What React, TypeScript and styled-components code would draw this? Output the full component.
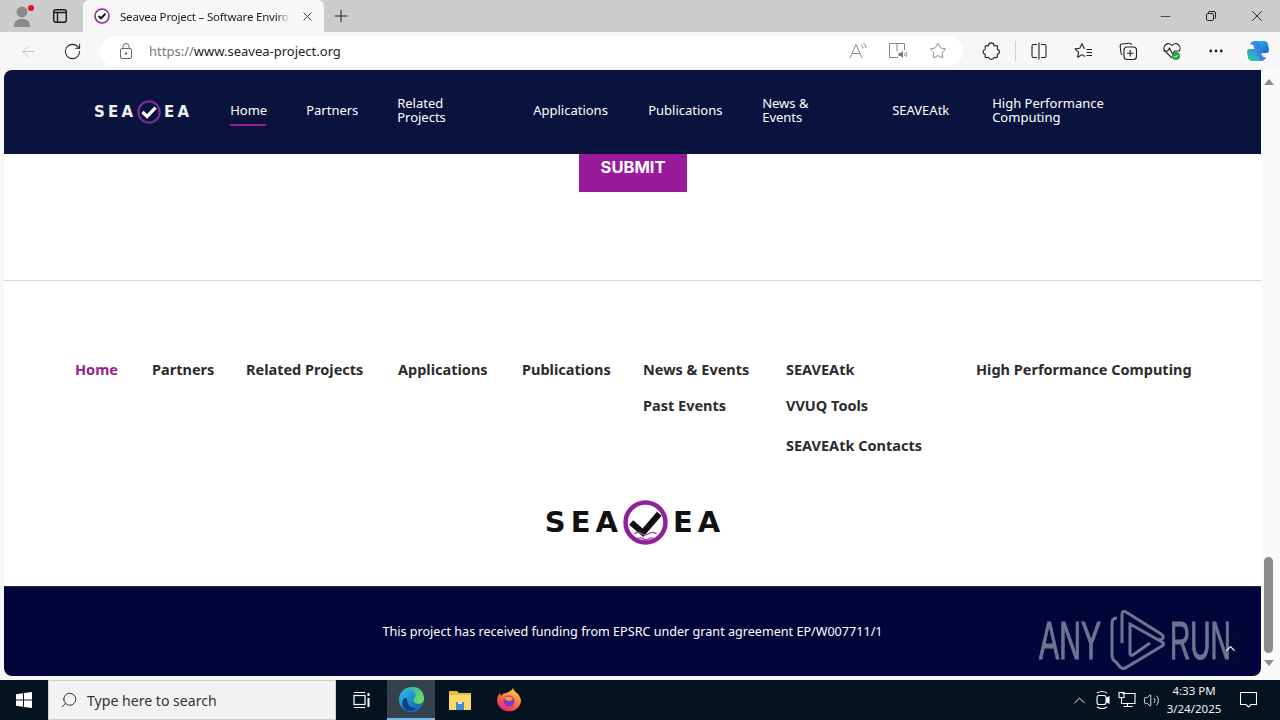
import React from 'react';
import styled, { createGlobalStyle } from 'styled-components';
import { ArrowLeft, RotateCw, Star, X, Plus, Minus, Search, ChevronUp, Volume2, MoreHorizontal } from 'lucide-react';

const GlobalStyle = createGlobalStyle`
    html, body {
        margin: 0;
        padding: 0;
        width: 1280px;
        height: 720px;
        overflow: hidden;
        background: #f7f7f7;
    }
    * {
        box-sizing: border-box;
    }
`;

const Screen = styled.div`
    width: 1280px;
    height: 720px;
    display: flex;
    flex-direction: column;
    overflow: hidden;
    font-family: 'Noto Sans', 'Open Sans', sans-serif;
    position: relative;
`;

const TabStrip = styled.div`
    height: 32px;
    background: #cccccc;
    display: flex;
    align-items: flex-end;
    color: #222;
`;

const ProfileSlot = styled.div`
    width: 44px;
    height: 32px;
    display: flex;
    align-items: center;
    justify-content: center;
    position: relative;
`;

const RedDot = styled.span`
    position: absolute;
    top: 5px;
    left: 28px;
    width: 6px;
    height: 6px;
    border-radius: 50%;
    background: #e81123;
`;

const TabsIconSlot = styled.div`
    width: 32px;
    height: 32px;
    display: flex;
    align-items: center;
    justify-content: center;
`;

const ActiveTab = styled.div`
    width: 241px;
    height: 32px;
    margin-left: 7px;
    background: #f7f7f7;
    border-radius: 6px 6px 0 0;
    display: flex;
    align-items: center;
    padding: 0 9px 0 11px;
    gap: 10px;
    svg {
        flex: none;
    }
`;

const TabTitle = styled.span`
    flex: 1;
    min-width: 0;
    font-size: 11.5px;
    letter-spacing: -0.2px;
    white-space: nowrap;
    color: #222;
    -webkit-mask-image: linear-gradient(90deg, #000 92%, transparent);
`;

const NewTab = styled.div`
    width: 34px;
    height: 32px;
    display: flex;
    align-items: center;
    justify-content: center;
`;

const WindowControls = styled.div`
    margin-left: auto;
    display: flex;
    height: 32px;
    align-items: center;
`;

const WindowButton = styled.div`
    width: 46px;
    height: 32px;
    display: flex;
    align-items: center;
    justify-content: center;
`;

const AddressRow = styled.div`
    height: 38px;
    background: #f7f7f7;
    display: flex;
    align-items: center;
    padding-left: 9px;
`;

const NavIcon = styled.div<{ $width: number }>`
    width: ${(props) => props.$width}px;
    height: 32px;
    display: flex;
    align-items: center;
    justify-content: center;
    flex: none;
    position: relative;
`;

const AddressBar = styled.div`
    width: 863px;
    height: 30px;
    margin: 0 4px 0 3px;
    background: #fff;
    border-radius: 15px;
    display: flex;
    align-items: center;
    padding-left: 19px;
`;

const UrlText = styled.div`
    flex: 1;
    margin-left: 16px;
    font-size: 13px;
    color: #222;
    span {
        color: #767676;
    }
`;

const ToolDivider = styled.div`
    width: 1px;
    height: 20px;
    flex: none;
    background: #d0d0d0;
`;

const PageArea = styled.div`
    flex: 1;
    min-height: 0;
    display: flex;
    padding-left: 4px;
    background: #f7f7f7;
`;

const Page = styled.div`
    width: 1257px;
    height: 606px;
    background: #fff;
    border-radius: 8px 0 8px 8px;
    overflow: hidden;
    display: flex;
    flex-direction: column;
    position: relative;
`;

const Header = styled.header`
    height: 84px;
    flex: none;
    background: #0a133e;
    display: flex;
    align-items: center;
    padding-left: 90px;
    gap: 41px;
    position: relative;
    z-index: 1;
`;

const Wordmark = styled.div<{ $size: number; $color: string; $gap: number; $spacing: number }>`
    display: flex;
    align-items: center;
    gap: ${(props) => props.$gap}px;
    font-family: 'DejaVu Sans', 'Liberation Sans', sans-serif;
    font-weight: 700;
    font-size: ${(props) => props.$size}px;
    letter-spacing: ${(props) => props.$spacing}px;
    color: ${(props) => props.$color};
    line-height: 1;
    span {
        margin-right: ${(props) => -props.$spacing}px;
    }
`;

const TopNav = styled.nav`
    display: flex;
    align-items: center;
    gap: 40px;
    padding-bottom: 4px;
`;

const TopLink = styled.a<{ $width: number; $active?: boolean }>`
    display: block;
    flex: none;
    width: ${(props) => props.$width}px;
    font-size: 13px;
    line-height: 14px;
    white-space: nowrap;
    color: #fff;
    position: relative;
    ${(props) =>
        props.$active &&
        `&::after {
            content: '';
            position: absolute;
            left: 0;
            right: 0;
            bottom: -9px;
            height: 2px;
            background: #9c1f97;
        }`}
`;

const Main = styled.main`
    height: 127px;
    flex: none;
    display: flex;
    justify-content: center;
    align-items: flex-start;
    border-bottom: 1px solid #d6d6d6;
`;

const SubmitButton = styled.button`
    width: 108px;
    height: 38px;
    margin-right: -1px;
    border: 0;
    background: #9a1a9c;
    color: #fff;
    font-family: 'Inter', 'Liberation Sans', sans-serif;
    font-weight: 700;
    font-size: 16.5px;
    padding: 0 0 11px;
    display: flex;
    align-items: center;
    justify-content: center;
    line-height: 1;
`;

const FooterNav = styled.nav`
    height: 219px;
    flex: none;
    display: flex;
    padding: 78px 0 0 71px;
    gap: 34px;
`;

const FooterColumn = styled.div<{ $width: number }>`
    display: flex;
    flex-direction: column;
    width: ${(props) => props.$width}px;
    flex: none;
`;

const FooterLink = styled.a<{ $active?: boolean; $top?: number }>`
    display: block;
    font-size: 14.5px;
    font-weight: 700;
    line-height: 20px;
    white-space: nowrap;
    margin-top: ${(props) => props.$top ?? 0}px;
    color: ${(props) => (props.$active ? '#97208f' : '#2b2b2b')};
`;

const LogoRow = styled.div`
    height: 86px;
    flex: none;
    display: flex;
    justify-content: center;
    align-items: flex-start;
`;

const Funding = styled.footer`
    flex: 1;
    background: #00053a;
    display: flex;
    justify-content: center;
    padding-top: 37px;
    border-top: 1px solid #1d2a4d;
    color: #fff;
    font-size: 12.6px;
    line-height: 16px;
`;

const ScrollTop = styled.div`
    position: absolute;
    left: 1212px;
    top: 564px;
    width: 28px;
    height: 28px;
    background: #040735;
    display: flex;
    align-items: center;
    justify-content: center;
`;

const Watermark = styled.div`
    position: absolute;
    left: 1039px;
    top: 610px;
    height: 61px;
    display: flex;
    align-items: center;
    color: #fff;
    opacity: 0.44;
    font-family: 'Liberation Sans', sans-serif;
    font-size: 53px;
    line-height: 1;
    z-index: 4;
`;

const WatermarkWord = styled.span<{ $width: number; $scale: number; $inset?: number }>`
    display: inline-block;
    width: ${(props) => props.$width}px;
    margin-left: ${(props) => props.$inset ?? 0}px;
    transform-origin: left center;
    transform: scaleX(${(props) => props.$scale});
    white-space: nowrap;
    -webkit-text-stroke: 1px #fff;
`;

const Scrollbar = styled.div`
    width: 19px;
    height: 610px;
    background: #fafafa;
    display: flex;
    flex-direction: column;
    align-items: center;
    justify-content: space-between;
    padding: 9px 4px 14px 0;
    position: relative;
`;

const ScrollArrow = styled.span<{ $down?: boolean }>`
    width: 0;
    height: 0;
    border-left: 5px solid transparent;
    border-right: 5px solid transparent;
    ${(props) => (props.$down ? 'border-top: 6px solid #8a8a8a;' : 'border-bottom: 6px solid #8a8a8a;')}
`;

const ScrollThumb = styled.div`
    position: absolute;
    left: 3px;
    top: 487px;
    width: 9px;
    height: 96px;
    background: #8c8c8c;
    border-radius: 5px;
`;

const Taskbar = styled.div`
    height: 40px;
    flex: none;
    background: #04131f;
    display: flex;
    align-items: stretch;
    color: #fff;
`;

const StartSlot = styled.div`
    width: 48px;
    display: flex;
    align-items: center;
    justify-content: center;
`;

const SearchBox = styled.div`
    width: 288px;
    background: #f2f2f2;
    border: 1px solid #cfcfcf;
    display: flex;
    align-items: center;
    padding-left: 11px;
    gap: 9px;
    color: #333;
    font-size: 14.1px;
    svg {
        transform: scaleX(-1);
    }
`;

const TaskSlot = styled.div<{ $width: number; $active?: boolean }>`
    width: ${(props) => props.$width}px;
    display: flex;
    align-items: center;
    justify-content: center;
    background: ${(props) => (props.$active ? '#33424d' : 'transparent')};
    border-bottom: ${(props) => (props.$active ? '2px solid #76b9ed' : '0')};
`;

const Tray = styled.div`
    margin-left: auto;
    display: flex;
    align-items: center;
    padding-right: 8px;
`;

const TrayIcon = styled.div<{ $width: number }>`
    width: ${(props) => props.$width}px;
    display: flex;
    align-items: center;
    justify-content: center;
`;

const Clock = styled.div`
    width: 60px;
    margin-left: 1px;
    text-align: center;
    white-space: nowrap;
    font-size: 11.5px;
    line-height: 18px;
    color: #f0f0f0;
`;

const Favicon = () => (
    <svg width="16" height="16" viewBox="0 0 16 16">
        <circle cx="8" cy="8" r="7" fill="#fff" stroke="#93269b" strokeWidth="1.6" />
        <path d="M4.600 8 L7 10.400 L11.400 5.600" fill="none" stroke="#111" strokeWidth="2" />
    </svg>
);

const ProfileIcon = () => (
    <svg width="18" height="24" viewBox="0 0 18 24" fill="#8a8a8a">
        <circle cx="9" cy="8" r="5.400" />
        <path d="M1 23c0-6 3-8 8-8s8 2 8 8z" />
    </svg>
);

const TabsIcon = () => (
    <svg width="14" height="14" viewBox="0 0 14 14" fill="none" stroke="#1a1a1a" strokeWidth="1.400">
        <rect x="0.700" y="0.700" width="12.600" height="12.600" rx="2" />
        <path d="M0.700 3.500h12.600M4.500 3.500v9.800" />
    </svg>
);

const RestoreIcon = () => (
    <svg width="10" height="10" viewBox="0 0 10 10" fill="none" stroke="#222">
        <rect x="0.500" y="2.500" width="7" height="7" rx="1.200" />
        <path d="M2.500 2V1.300Q2.500 .5 3.300 .5H8Q9.500 .5 9.500 2V6.800Q9.500 7.500 8.500 7.500" />
    </svg>
);

const LockIcon = () => (
    <svg width="14" height="16" viewBox="0 0 14 16" fill="none" stroke="#666" strokeWidth="1">
        <rect x="1.500" y="5.500" width="11" height="10" rx="1.500" />
        <path d="M4 5.500V3.500a3 3 0 0 1 6 0V5.500" />
        <circle cx="7" cy="10.500" r="0.800" fill="#666" />
    </svg>
);

const ReadAloudIcon = () => (
    <svg width="20" height="18" viewBox="0 0 20 18" fill="none" stroke="#888" strokeWidth="1">
        <path d="M2 16 L8 2.500 L14 16 M4.200 11.500H11.800" />
        <path d="M13 2.500q2 1.500 2 4M15.500 1q2.500 2 2.500 5" />
    </svg>
);

const ImmersiveIcon = () => (
    <svg width="20" height="18" viewBox="0 0 20 18" fill="none" stroke="#888" strokeWidth="1">
        <path d="M10 15.500H1.500V1.500h15v6.500M9 1.500v8" />
        <path d="M10.500 11h2l2.500-2v7l-2.500-2h-2z" fill="#777" stroke="none" />
        <path d="M16.500 11q1 1.500 0 3M18.200 10q1.500 2.500 0 5" />
    </svg>
);

const PuzzleIcon = () => (
    <svg width="20" height="20" viewBox="0 0 20 20" fill="none" stroke="#222" strokeWidth="1.200" strokeLinejoin="round">
        <path d="M7.500 4.500c.2-3.500 5.300-3.500 5.500 0 .1 1 2.500-.5 3.300.4 1 1-.7 2.900.2 3.400 2.600.7 2.500 4.400 0 5-1 .3.600 2.300-.3 3.100-1 .9-2.800-.7-3.200.2-.8 2.300-4.600 2.300-5.300 0-.3-.9-2.500.7-3.400-.2-.9-.9.600-2.600-.2-3-2.700-.8-2.700-4.300 0-5.200.8-.3-.6-2.400.3-3.200 1-.9 3 .5 3.100-.5z" />
    </svg>
);

const SplitIcon = () => (
    <svg width="20" height="20" viewBox="0 0 20 20" fill="none" stroke="#222" strokeWidth="1.100">
        <path d="M8 3.500H4.500Q3 3.500 3 5v10q0 1.500 1.500 1.500H8M12 3.500h3.500Q17 3.500 17 5v10q0 1.500-1.500 1.500H12M10 1.500v17" />
    </svg>
);

const FavoritesIcon = () => (
    <svg width="20" height="20" viewBox="0 0 20 20" fill="none" stroke="#222" strokeWidth="1.100" strokeLinejoin="round">
        <path d="M8 2.500 10 7.300H11M5.800 7.300 8 2.500M5.800 7.300 1 7.800l3.600 3.300-1 5.100L8 13.600l3.200 1.900" />
        <path d="M12.500 8.500H18M12.500 11.500H18M12.500 14.500H18" />
    </svg>
);

const CollectionsIcon = () => (
    <svg width="20" height="20" viewBox="0 0 20 20" fill="none" stroke="#222" strokeWidth="1.100">
        <rect x="6" y="6" width="12.500" height="12.500" rx="3" />
        <path d="M12.200 9v6.500M9 12.200h6.500" />
        <path d="M13.500 3.800Q13 2 11 2.200L4 3Q2 3.400 2.200 5.400L3 12q.3 1.600 1.500 2" />
    </svg>
);

const HealthIcon = () => (
    <svg width="20" height="20" viewBox="0 0 20 20">
        <path d="M10 17 L2.800 9.800 A4.300 4.300 0 0 1 10 4.500 A4.300 4.300 0 0 1 17.200 9.800" fill="none" stroke="#222" strokeWidth="1.100" />
        <path d="M1.500 10h4l2-3 3 6 2-3h5" fill="none" stroke="#222" strokeWidth="1.100" />
        <circle cx="14" cy="15" r="4" fill="#2f9e44" />
        <path d="M12.300 15l1.300 1.300 2.200-2.400" fill="none" stroke="#fff" strokeWidth="1" />
    </svg>
);

const CopilotIcon = () => (
    <svg width="24" height="24" viewBox="0 0 24 24">
        <defs>
            <linearGradient id="copilotA" x1="0" y1="0" x2="1" y2="1">
                <stop offset="0" stopColor="#2fc6d8" />
                <stop offset="1" stopColor="#1a5fd6" />
            </linearGradient>
            <linearGradient id="copilotB" x1="1" y1="0" x2="0" y2="1">
                <stop offset="0" stopColor="#2a8ae6" />
                <stop offset="1" stopColor="#2ecf9a" />
            </linearGradient>
        </defs>
        <path d="M8 2h10q3 0 4 3l1 6q0 3-3 3h-5l-3-9q-1-3-4-3z" fill="url(#copilotA)" />
        <path d="M16 22H6q-3 0-4-3L1 13q0-3 3-3h5l3 9q1 3 4 3z" fill="url(#copilotB)" />
        <path d="M9 2q3 0 4 3l3 11q1 3 4 2-1 4-5 4-2 0-3-3L8 8Q7 4 4 6q1-4 5-4z" fill="#1b6fe0" opacity="0.850" />
    </svg>
);

const SeaveaMark = ({ size, tick, ring, waves }: { size: number; tick: string; ring: string; waves?: boolean }) => (
    <svg width={size} height={size} viewBox="0 0 44 44">
        <circle cx="22" cy="22" r="19.500" fill="none" stroke={ring} strokeWidth="4.400" />
        <path d={waves ? 'M8 22 L19.500 32 L35.500 13.500' : 'M10 22 L18.500 30 L34 14'} fill="none" stroke={tick} strokeWidth="6" />
        {waves && (
            <path d="M11 33q3.500-2.500 7 0t7 0 8 0M14 38q3-2 6 0t5 0 5 0" fill="none" stroke="#a84db0" strokeWidth="1.300" />
        )}
    </svg>
);

const WindowsLogo = () => (
    <svg width="16" height="16" viewBox="0 0 16 16" fill="#fff">
        <path d="M0 2.200 7 1.200V7.500H0zM8 1.100 16 0V7.500H8zM0 8.500H7V14.800L0 13.800zM8 8.500H16V16L8 14.900z" />
    </svg>
);

const TaskViewIcon = () => (
    <svg width="18" height="18" viewBox="0 0 18 18" fill="none" stroke="#fff" strokeWidth="1.200">
        <rect x="1" y="4.500" width="11" height="9" />
        <path d="M1 1.500h11M1 16.500h11" />
        <path d="M15.500 2v3M15.500 7v9" strokeWidth="2" />
    </svg>
);

const EdgeLogo = () => (
    <svg width="25" height="25" viewBox="0 0 24 24">
        <defs>
            <linearGradient id="edgeA" x1="0" y1="0" x2="1" y2="1">
                <stop offset="0" stopColor="#35c1f1" />
                <stop offset="1" stopColor="#0c59a4" />
            </linearGradient>
            <linearGradient id="edgeB" x1="0" y1="0" x2="1" y2="0.600">
                <stop offset="0" stopColor="#1b9de2" />
                <stop offset="1" stopColor="#6fdc5b" />
            </linearGradient>
        </defs>
        <circle cx="12" cy="12" r="12" fill="url(#edgeA)" />
        <path d="M1 9C3 2 10 0 14 0c6 0 10 5 10 11 0 4-3 5-6 5-2 0-4-1-4-3 0-3 2-2 2-5 0-3-3-5-6-5C6 3 2 6 1 9z" fill="url(#edgeB)" />
        <path d="M8 13c0 5 5 8 9 7-2 3-7 4-10 2-3-2-5-6-3-10 1-2 4-2 4 1z" fill="#0f3f8c" />
    </svg>
);

const FolderLogo = () => (
    <svg width="22" height="20" viewBox="0 0 22 20">
        <path d="M0 1h8l2 2h12v17H0z" fill="#e8b93a" />
        <path d="M0 5h22v15H0z" fill="#ffd866" />
        <path d="M7 12h8v8H7z" fill="#3e8ed0" />
        <path d="M9 12h4v2H9z" fill="#d6e8f7" />
    </svg>
);

const FirefoxLogo = () => (
    <svg width="24" height="24" viewBox="0 0 24 24">
        <defs>
            <linearGradient id="foxA" x1="0.800" y1="0" x2="0.200" y2="1">
                <stop offset="0" stopColor="#ffd43a" />
                <stop offset="0.500" stopColor="#ff7139" />
                <stop offset="1" stopColor="#e31587" />
            </linearGradient>
        </defs>
        <path d="M16 0c1 3 3 4 5 6 2 3 3 5 3 7A12 11 0 1 1 1 8l2-3 1 3c1-2 3-3 5-3 2-1 6-2 7-5z" fill="url(#foxA)" />
        <circle cx="12" cy="13" r="5.500" fill="#7a3bd0" />
        <path d="M7 10q5-3 9 0-1 3-4 3-3 0-5-3z" fill="#ff9a3a" />
    </svg>
);

const MeetIcon = () => (
    <svg width="18" height="20" viewBox="0 0 18 20" fill="none" stroke="#fff" strokeWidth="1.100">
        <rect x="3" y="5.500" width="9" height="9" rx="2" />
        <path d="M12 8.500l3-1.500v6l-3-1.500" fill="#fff" />
        <path d="M3 3q5-3 10 0M3 17q5 3 10 0" />
    </svg>
);

const NetworkIcon = () => (
    <svg width="18" height="18" viewBox="0 0 18 18" fill="none" stroke="#fff" strokeWidth="1.100">
        <path d="M4.500 2.500H17V12.500H4.500M9.500 12.500v3M5.500 15.500h9" />
        <rect x="1" y="1.500" width="5" height="5" />
        <path d="M3.500 6.500v6.500" />
    </svg>
);

const NotificationIcon = () => (
    <svg width="17" height="16" viewBox="0 0 17 16" fill="none" stroke="#fff" strokeWidth="1.100">
        <path d="M.5.5H16.500V12.500H11L8.500 15 6 12.500H.5z" />
    </svg>
);

const AnyRunMark = () => (
    <svg width="55" height="61" viewBox="10 5 55 61" fill="none" stroke="#fff" strokeWidth="3">
        <path d="M17 13Q12 13 12 18V50Q12 55 16 57L20 62Q23 65 27 62L62 41Q65 39 62 37L30 19V48Q30 51 33 50L50 38" />
        <path d="M22 38V9Q22 5 26 7L61 29Q65 32 62 34Q60 35 58 34" />
    </svg>
);

const App: React.FC = () => {
    return (
        <>
            <GlobalStyle />
            <Screen>
                <TabStrip>
                    <ProfileSlot>
                        <ProfileIcon />
                        <RedDot />
                    </ProfileSlot>
                    <TabsIconSlot>
                        <TabsIcon />
                    </TabsIconSlot>
                    <ActiveTab>
                        <Favicon />
                        <TabTitle>Seavea Project – Software Enviror</TabTitle>
                        <X size={15} strokeWidth={1.5} color="#333" />
                    </ActiveTab>
                    <NewTab>
                        <Plus size={20} strokeWidth={1.2} color="#222" />
                    </NewTab>
                    <WindowControls>
                        <WindowButton>
                            <Minus size={15} strokeWidth={1.1} color="#111" />
                        </WindowButton>
                        <WindowButton>
                            <RestoreIcon />
                        </WindowButton>
                        <WindowButton>
                            <X size={18} strokeWidth={1.1} color="#111" />
                        </WindowButton>
                    </WindowControls>
                </TabStrip>

                <AddressRow>
                    <NavIcon $width={38}>
                        <ArrowLeft size={19} strokeWidth={1.1} color="#bdbdbd" />
                    </NavIcon>
                    <NavIcon $width={50}>
                        <RotateCw size={19} strokeWidth={1.3} color="#222" />
                    </NavIcon>
                    <AddressBar>
                        <LockIcon />
                        <UrlText>
                            <span>https://</span>www.seavea-project.org
                        </UrlText>
                        <NavIcon $width={40}>
                            <ReadAloudIcon />
                        </NavIcon>
                        <NavIcon $width={40}>
                            <ImmersiveIcon />
                        </NavIcon>
                        <NavIcon $width={40}>
                            <Star size={18} strokeWidth={1} color="#666" />
                        </NavIcon>
                        <NavIcon $width={5} />
                    </AddressBar>
                    <NavIcon $width={48}>
                        <PuzzleIcon />
                    </NavIcon>
                    <ToolDivider />
                    <NavIcon $width={46}>
                        <SplitIcon />
                    </NavIcon>
                    <NavIcon $width={44}>
                        <FavoritesIcon />
                    </NavIcon>
                    <NavIcon $width={44}>
                        <CollectionsIcon />
                    </NavIcon>
                    <NavIcon $width={44}>
                        <HealthIcon />
                    </NavIcon>
                    <NavIcon $width={44}>
                        <MoreHorizontal size={18} strokeWidth={1.8} color="#222" />
                    </NavIcon>
                    <NavIcon $width={40}>
                        <CopilotIcon />
                    </NavIcon>
                </AddressRow>

                <PageArea>
                    <Page>
                        <Header>
                            <Wordmark $size={15} $color="#eeeef5" $gap={3.5} $spacing={3.2}>
                                <span>SEA</span>
                                <SeaveaMark size={24} tick="#ffffff" ring="#7d2a8f" />
                                <span>EA</span>
                            </Wordmark>
                            <TopNav>
                                <TopLink $width={36} $active>
                                    Home
                                </TopLink>
                                <TopLink $width={51}>Partners</TopLink>
                                <TopLink $width={96}>
                                    Related
                                    <br />
                                    Projects
                                </TopLink>
                                <TopLink $width={75}>Applications</TopLink>
                                <TopLink $width={74}>Publications</TopLink>
                                <TopLink $width={90}>
                                    News &amp;
                                    <br />
                                    Events
                                </TopLink>
                                <TopLink $width={60}>SEAVEAtk</TopLink>
                                <TopLink $width={125}>
                                    High Performance
                                    <br />
                                    Computing
                                </TopLink>
                            </TopNav>
                        </Header>

                        <Main>
                            <SubmitButton>SUBMIT</SubmitButton>
                        </Main>

                        <FooterNav>
                            <FooterColumn $width={43}>
                                <FooterLink $active>Home</FooterLink>
                            </FooterColumn>
                            <FooterColumn $width={60}>
                                <FooterLink>Partners</FooterLink>
                            </FooterColumn>
                            <FooterColumn $width={118}>
                                <FooterLink>Related Projects</FooterLink>
                            </FooterColumn>
                            <FooterColumn $width={90}>
                                <FooterLink>Applications</FooterLink>
                            </FooterColumn>
                            <FooterColumn $width={87}>
                                <FooterLink>Publications</FooterLink>
                            </FooterColumn>
                            <FooterColumn $width={109}>
                                <FooterLink>News &amp; Events</FooterLink>
                                <FooterLink $top={16}>Past Events</FooterLink>
                            </FooterColumn>
                            <FooterColumn $width={156}>
                                <FooterLink>SEAVEAtk</FooterLink>
                                <FooterLink $top={16}>VVUQ Tools</FooterLink>
                                <FooterLink $top={20}>SEAVEAtk Contacts</FooterLink>
                            </FooterColumn>
                            <FooterColumn $width={214}>
                                <FooterLink>High Performance Computing</FooterLink>
                            </FooterColumn>
                        </FooterNav>

                        <LogoRow>
                            <Wordmark $size={29} $color="#111" $gap={5} $spacing={5}>
                                <span>SEA</span>
                                <SeaveaMark size={45} tick="#111" ring="#93209b" waves />
                                <span>EA</span>
                            </Wordmark>
                        </LogoRow>

                        <Funding>This project has received funding from EPSRC under grant agreement EP/W007711/1</Funding>
                        <ScrollTop>
                            <ChevronUp size={15} strokeWidth={2} color="#fff" />
                        </ScrollTop>
                    </Page>
                    <Scrollbar>
                        <ScrollArrow />
                        <ScrollThumb />
                        <ScrollArrow $down />
                    </Scrollbar>
                </PageArea>

                <Taskbar>
                    <StartSlot>
                        <WindowsLogo />
                    </StartSlot>
                    <SearchBox>
                        <Search size={18} strokeWidth={1.2} color="#222" />
                        Type here to search
                    </SearchBox>
                    <TaskSlot $width={51}>
                        <TaskViewIcon />
                    </TaskSlot>
                    <TaskSlot $width={48} $active>
                        <EdgeLogo />
                    </TaskSlot>
                    <TaskSlot $width={49}>
                        <FolderLogo />
                    </TaskSlot>
                    <TaskSlot $width={49}>
                        <FirefoxLogo />
                    </TaskSlot>
                    <Tray>
                        <TrayIcon $width={24}>
                            <ChevronUp size={19} strokeWidth={1.2} color="#fff" />
                        </TrayIcon>
                        <TrayIcon $width={24}>
                            <MeetIcon />
                        </TrayIcon>
                        <TrayIcon $width={24}>
                            <NetworkIcon />
                        </TrayIcon>
                        <TrayIcon $width={24}>
                            <Volume2 size={17} strokeWidth={1.2} color="#fff" />
                        </TrayIcon>
                        <Clock>
                            4:33 PM
                            <br />
                            3/24/2025
                        </Clock>
                        <TrayIcon $width={48}>
                            <NotificationIcon />
                        </TrayIcon>
                    </Tray>
                </Taskbar>

                <Watermark>
                    <WatermarkWord $width={71} $scale={0.57}>
                        ANY
                    </WatermarkWord>
                    <AnyRunMark />
                    <WatermarkWord $width={61} $scale={0.53} $inset={5}>
                        RUN
                    </WatermarkWord>
                </Watermark>
            </Screen>
        </>
    );
};

export default App;
